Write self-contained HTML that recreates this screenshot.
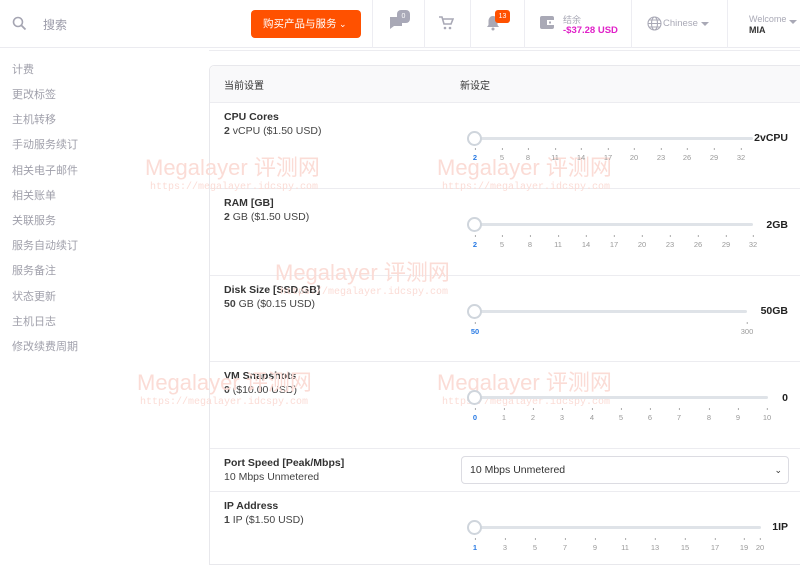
<!DOCTYPE html><html><head><meta charset="utf-8"><style>
*{margin:0;padding:0;box-sizing:border-box}
body{width:800px;height:551px;overflow:hidden;background:#fff;font-family:"Liberation Sans","Noto Sans CJK SC",sans-serif;color:#333;position:relative}
.a{position:absolute}
.hdr{left:0;top:0;width:800px;height:48px;border-bottom:1px solid #ebebf0;background:#fff}
.vs{top:0;height:48px;width:1px;background:#ededf2}
.side div{position:absolute;left:12px;font-size:11px;color:#a0a0ab}
.card{left:209px;top:65px;width:600px;height:500px;border:1px solid #e8e8ec;border-right:none;border-radius:5px 0 0 0;background:#fff}
.row{position:absolute;left:0;width:600px;border-top:1px solid #ececf0}
.t{font-size:10.5px;font-weight:bold;color:#333}
.s{font-size:10.5px;color:#444}
.track{position:absolute;height:3px;background:#dfe3e8;border-radius:2px}
.knob{position:absolute;width:15px;height:15px;border:2px solid #cfd5dc;border-radius:50%;background:#fff}
.tk{position:absolute;font-size:7.5px;color:#999;transform:translateX(-50%)}
.tk::before{content:"";position:absolute;left:50%;top:-5px;width:1px;height:2px;background:#aaa}
.tk.on{color:#2a7be4;font-weight:bold}
.val{position:absolute;font-size:10.5px;font-weight:bold;color:#222;text-align:right}
.wm{position:absolute;color:#fbdcd6;font-size:22px;white-space:nowrap}
.wu{position:absolute;color:#fbdcd6;font-family:"Liberation Mono",monospace;font-size:10px;white-space:nowrap}
</style></head><body>
<div class="a hdr"></div>
<div class="a" style="left:209px;top:50px;width:591px;height:1px;background:#ececf0"></div>
<svg class="a" style="left:12px;top:16px" width="15" height="15" viewBox="0 0 15 15"><circle cx="6" cy="6" r="4.5" fill="none" stroke="#a5a5b2" stroke-width="1.6"/><path d="M9.5 9.5L13.5 13.5" stroke="#a5a5b2" stroke-width="1.8"/></svg>
<div class="a" style="left:43px;top:16px;font-size:12px;color:#9a9aa8">搜索</div>
<div class="a" style="left:251px;top:10px;width:110px;height:28px;background:#ff5100;border-radius:4px;color:#fff;font-size:10.5px;line-height:28px;padding-left:12px">购买产品与服务<span style="position:absolute;left:88px;top:0;font-size:9px">&#8964;</span></div>
<div class="a vs" style="left:372px"></div><div class="a vs" style="left:424px"></div><div class="a vs" style="left:470px"></div><div class="a vs" style="left:524px"></div><div class="a vs" style="left:631px"></div><div class="a vs" style="left:727px"></div>
<svg class="a" style="left:388px;top:15px" width="16" height="16" viewBox="0 0 16 16"><path d="M2 2h12v9H6l-4 3z" fill="#a9a9b6"/></svg>
<div class="a" style="left:397px;top:10px;width:13px;height:13px;border-radius:4px;background:#a9a9b8;color:#fff;font-size:7px;text-align:center;line-height:13px">0</div>
<svg class="a" style="left:439px;top:16px" width="15" height="14" viewBox="0 0 15 14"><path d="M0 1h3l2 7h7l2-5H4" fill="none" stroke="#a9a9b6" stroke-width="1.6"/><circle cx="6" cy="12" r="1.3" fill="#a9a9b6"/><circle cx="11" cy="12" r="1.3" fill="#a9a9b6"/></svg>
<svg class="a" style="left:486px;top:15px" width="14" height="16" viewBox="0 0 14 16"><path d="M7 1c3 0 4.5 2.5 4.5 5v4l1.5 2H1l1.5-2V6C2.5 3.5 4 1 7 1z" fill="#a9a9b6"/><circle cx="7" cy="14" r="1.5" fill="#a9a9b6"/></svg>
<div class="a" style="left:495px;top:10px;width:15px;height:13px;border-radius:3px;background:#ff5100;color:#fff;font-size:7px;text-align:center;line-height:13px">13</div>
<svg class="a" style="left:540px;top:16px" width="15" height="14" viewBox="0 0 15 14"><rect x="0" y="0" width="14" height="13" rx="2" fill="#a9a9b6"/><rect x="7" y="4" width="7" height="5" fill="#fff"/><rect x="9" y="5.5" width="2" height="2" fill="#a9a9b6"/></svg>
<div class="a" style="left:563px;top:13px;font-size:9px;color:#a9a9b6">结余</div>
<div class="a" style="left:563px;top:25px;font-size:9.5px;font-weight:bold;color:#e020c8">-$37.28 USD</div>
<svg class="a" style="left:647px;top:16px" width="15" height="15" viewBox="0 0 15 15" fill="none" stroke="#a9a9b6" stroke-width="1.1"><circle cx="7.5" cy="7.5" r="6.5"/><ellipse cx="7.5" cy="7.5" rx="3" ry="6.5"/><path d="M1 7.5h13M2 4h11M2 11h11"/></svg>
<div class="a" style="left:663px;top:18px;font-size:9.5px;color:#a9a9b6">Chinese</div>
<div class="a" style="left:701px;top:22px;border:4px solid transparent;border-top-color:#a9a9b6"></div>
<div class="a" style="left:749px;top:14px;font-size:9px;color:#a9a9b6">Welcome</div>
<div class="a" style="left:749px;top:25px;font-size:9px;font-weight:bold;color:#333">MIA</div>
<div class="a" style="left:789px;top:20px;border:4px solid transparent;border-top-color:#a9a9b6"></div>
<div class="side">
<div style="top:61px">计费</div><div style="top:86px">更改标签</div><div style="top:111px">主机转移</div><div style="top:136px">手动服务续订</div><div style="top:162px">相关电子邮件</div><div style="top:187px">相关账单</div><div style="top:212px">关联服务</div><div style="top:237px">服务自动续订</div><div style="top:262px">服务备注</div><div style="top:288px">状态更新</div><div style="top:313px">主机日志</div><div style="top:338px">修改续费周期</div>
</div>
<div class="a card">
<div class="a" style="left:0;top:0;width:600px;height:36px;background:#f9f9fa;border-radius:5px 0 0 0"></div>
<div class="a" style="left:14px;top:11px;font-size:10px;color:#333">当前设置</div>
<div class="a" style="left:250px;top:11px;font-size:10px;color:#333">新设定</div>
<div class="row" style="top:36px;height:86px"><div class="a t" style="left:14px;top:8px">CPU Cores</div><div class="a s" style="left:14px;top:22px"><b>2</b> vCPU ($1.50 USD)</div></div>
<div class="row" style="top:122px"><div class="a t" style="left:14px;top:8px">RAM [GB]</div><div class="a s" style="left:14px;top:22px"><b>2</b> GB ($1.50 USD)</div></div>
<div class="row" style="top:209px"><div class="a t" style="left:14px;top:8px">Disk Size [SSD,GB]</div><div class="a s" style="left:14px;top:22px"><b>50</b> GB ($0.15 USD)</div></div>
<div class="row" style="top:295px"><div class="a t" style="left:14px;top:8px">VM Snapshots</div><div class="a s" style="left:14px;top:22px"><b>0</b> ($10.00 USD)</div></div>
<div class="row" style="top:382px"><div class="a t" style="left:14px;top:8px">Port Speed [Peak/Mbps]</div><div class="a s" style="left:14px;top:22px">10 Mbps Unmetered</div>
<div class="a" style="left:251px;top:7px;width:328px;height:28px;border:1px solid #dcdce2;border-radius:4px;font-size:10.5px;color:#333;line-height:26px;padding-left:8px">10 Mbps Unmetered<span style="position:absolute;right:6px;top:0;font-size:9px">&#8964;</span></div></div>
<div class="row" style="top:425px"><div class="a t" style="left:14px;top:8px">IP Address</div><div class="a s" style="left:14px;top:22px"><b>1</b> IP ($1.50 USD)</div></div>
</div>
<div class="wm" style="left:145px;top:150px">Megalayer 评测网</div><div class="wu" style="left:150px;top:182px">https://megalayer.idcspy.com</div>
<div class="wm" style="left:437px;top:150px">Megalayer 评测网</div><div class="wu" style="left:442px;top:182px">https://megalayer.idcspy.com</div>
<div class="wm" style="left:275px;top:255px">Megalayer 评测网</div><div class="wu" style="left:280px;top:287px">https://megalayer.idcspy.com</div>
<div class="wm" style="left:137px;top:365px">Megalayer 评测网</div><div class="wu" style="left:140px;top:397px">https://megalayer.idcspy.com</div>
<div class="wm" style="left:437px;top:365px">Megalayer 评测网</div><div class="wu" style="left:442px;top:397px">https://megalayer.idcspy.com</div>
<div class="track" style="left:475px;top:137px;width:278px"></div><div class="knob" style="left:467px;top:131px"></div><div class="val" style="left:740px;top:132px;width:48px">2vCPU</div>
<div class="track" style="left:475px;top:223px;width:278px"></div><div class="knob" style="left:467px;top:217px"></div><div class="val" style="left:740px;top:219px;width:48px">2GB</div>
<div class="track" style="left:475px;top:310px;width:272px"></div><div class="knob" style="left:467px;top:304px"></div><div class="val" style="left:740px;top:305px;width:48px">50GB</div>
<div class="track" style="left:475px;top:396px;width:293px"></div><div class="knob" style="left:467px;top:390px"></div><div class="val" style="left:740px;top:392px;width:48px">0</div>
<div class="track" style="left:475px;top:526px;width:286px"></div><div class="knob" style="left:467px;top:520px"></div><div class="val" style="left:740px;top:521px;width:48px">1IP</div>
<div class="tk on" style="left:475px;top:153px">2</div><div class="tk" style="left:502px;top:153px">5</div><div class="tk" style="left:528px;top:153px">8</div><div class="tk" style="left:555px;top:153px">11</div><div class="tk" style="left:581px;top:153px">14</div><div class="tk" style="left:608px;top:153px">17</div><div class="tk" style="left:634px;top:153px">20</div><div class="tk" style="left:661px;top:153px">23</div><div class="tk" style="left:687px;top:153px">26</div><div class="tk" style="left:714px;top:153px">29</div><div class="tk" style="left:741px;top:153px">32</div>
<div class="tk on" style="left:475px;top:240px">2</div><div class="tk" style="left:502px;top:240px">5</div><div class="tk" style="left:530px;top:240px">8</div><div class="tk" style="left:558px;top:240px">11</div><div class="tk" style="left:586px;top:240px">14</div><div class="tk" style="left:614px;top:240px">17</div><div class="tk" style="left:642px;top:240px">20</div><div class="tk" style="left:670px;top:240px">23</div><div class="tk" style="left:698px;top:240px">26</div><div class="tk" style="left:726px;top:240px">29</div><div class="tk" style="left:753px;top:240px">32</div>
<div class="tk on" style="left:475px;top:327px">50</div><div class="tk" style="left:747px;top:327px">300</div>
<div class="tk on" style="left:475px;top:413px">0</div><div class="tk" style="left:504px;top:413px">1</div><div class="tk" style="left:533px;top:413px">2</div><div class="tk" style="left:562px;top:413px">3</div><div class="tk" style="left:592px;top:413px">4</div><div class="tk" style="left:621px;top:413px">5</div><div class="tk" style="left:650px;top:413px">6</div><div class="tk" style="left:679px;top:413px">7</div><div class="tk" style="left:709px;top:413px">8</div><div class="tk" style="left:738px;top:413px">9</div><div class="tk" style="left:767px;top:413px">10</div>
<div class="tk on" style="left:475px;top:543px">1</div><div class="tk" style="left:505px;top:543px">3</div><div class="tk" style="left:535px;top:543px">5</div><div class="tk" style="left:565px;top:543px">7</div><div class="tk" style="left:595px;top:543px">9</div><div class="tk" style="left:625px;top:543px">11</div><div class="tk" style="left:655px;top:543px">13</div><div class="tk" style="left:685px;top:543px">15</div><div class="tk" style="left:715px;top:543px">17</div><div class="tk" style="left:744px;top:543px">19</div><div class="tk" style="left:760px;top:543px">20</div>
</body></html>
